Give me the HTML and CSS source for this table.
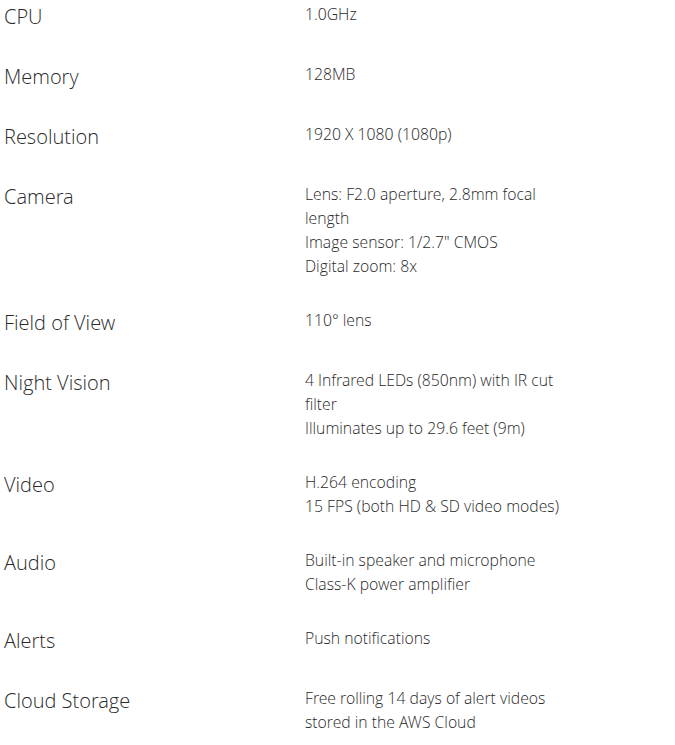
FILE: index.html
```html
<!DOCTYPE html>
<html lang="en">
<head>
<meta charset="utf-8">
<title>Specifications</title>
<link rel="stylesheet" href="styles.css">
</head>
<body>
<dl class="specs">
  <div class="row"><dt class="label">CPU</dt><dd class="value">1.0GHz</dd></div>
  <div class="row"><dt class="label">Memory</dt><dd class="value">128MB</dd></div>
  <div class="row"><dt class="label">Resolution</dt><dd class="value">1920 X 1080 (1080p)</dd></div>
  <div class="row"><dt class="label">Camera</dt><dd class="value">Lens: F2.0 aperture, 2.8mm focal length<br>Image sensor: 1/2.7" CMOS<br>Digital zoom: 8x</dd></div>
  <div class="row"><dt class="label">Field of View</dt><dd class="value">110° lens</dd></div>
  <div class="row"><dt class="label">Night Vision</dt><dd class="value">4 Infrared LEDs (850nm) with IR cut filter<br>Illuminates up to 29.6 feet (9m)</dd></div>
  <div class="row"><dt class="label">Video</dt><dd class="value">H.264 encoding<br>15 FPS (both HD &amp; SD video modes)</dd></div>
  <div class="row"><dt class="label">Audio</dt><dd class="value">Built-in speaker and microphone<br>Class-K power amplifier</dd></div>
  <div class="row"><dt class="label">Alerts</dt><dd class="value">Push notifications</dd></div>
  <div class="row"><dt class="label">Cloud Storage</dt><dd class="value">Free rolling 14 days of alert videos stored in the AWS Cloud</dd></div>
</dl>
</body>
</html>
```

FILE: styles.css
```css
html, body {
  margin: 0;
  padding: 0;
  background: #ffffff;
}

body {
  font-family: "Open Sans Light", "Open Sans", "Liberation Sans", sans-serif;
  font-weight: 300;
  color: #2a2a2a;
}

.specs {
  margin: 0;
  padding: 2px 0 0 4px;
}

.row {
  display: grid;
  grid-template-columns: 301px 265px;
  align-items: start;
  padding-bottom: 30px;
}

.label {
  margin: 0;
  font-size: 20px;
  line-height: 26px;
  padding: 2px 0 2px;
}

.value {
  margin: 0;
  font-size: 15.75px;
  line-height: 24px;
}
```
